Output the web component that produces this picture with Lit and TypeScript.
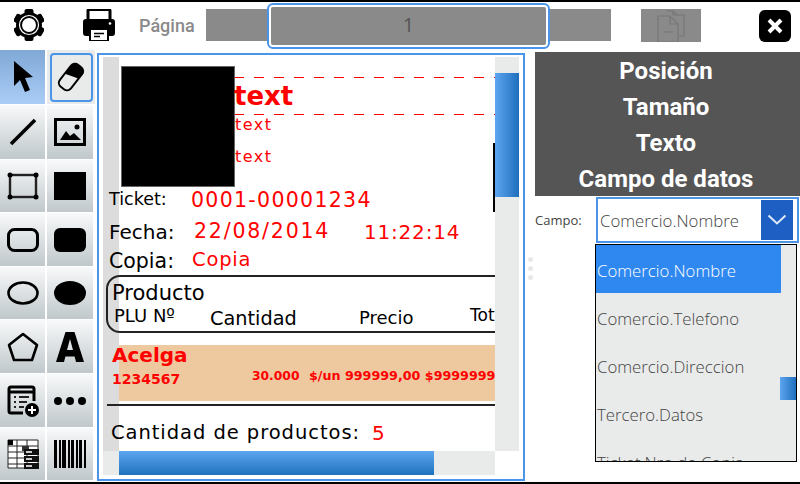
import { LitElement, html, css, svg } from "lit";
import { customElement } from "lit/decorators.js";

const i = (w: number, h: number, body: unknown) =>
  html`<svg width=${w} height=${h} viewBox="0 0 ${w} ${h}">${body}</svg>`;

const tools = [
  i(24, 36, svg`<path d="M3 2 L3 27 L9 21 L14 33 L19 31 L14 19 L22 18 Z" fill="#000"/>`),
  i(28, 36, svg`<g transform="rotate(38 14 18)"><rect x="6" y="3" width="16" height="30" rx="6" fill="#000"/><path d="M8 19 L20 15 V27 Q20 31 16 31 H12 Q8 31 8 27 Z" fill="#e9ebea"/></g>`),
  i(28, 28, svg`<path d="M2 26 L26 2" stroke="#000" stroke-width="3.5"/>`),
  i(32, 28, svg`<rect x="1.5" y="1.5" width="29" height="25" fill="none" stroke="#000" stroke-width="3"/><path d="M6 22 L12 13 L16 18 L20 15 L27 22 Z" fill="#000"/><circle cx="23" cy="9" r="2.5" fill="#000"/>`),
  i(32, 28, svg`<rect x="3" y="3" width="26" height="22" fill="none" stroke="#222" stroke-width="2.4"/><g fill="#000"><circle cx="3" cy="3" r="2.5"/><circle cx="29" cy="3" r="2.5"/><circle cx="3" cy="25" r="2.5"/><circle cx="29" cy="25" r="2.5"/></g>`),
  i(32, 28, svg`<rect x="0" y="0" width="32" height="28" fill="#000"/>`),
  i(32, 24, svg`<rect x="1.5" y="1.5" width="29" height="21" rx="6" fill="none" stroke="#000" stroke-width="3"/>`),
  i(32, 24, svg`<rect x="0" y="0" width="32" height="24" rx="6" fill="#000"/>`),
  i(32, 24, svg`<ellipse cx="16" cy="12" rx="14.5" ry="10.5" fill="none" stroke="#000" stroke-width="2.6"/>`),
  i(32, 24, svg`<ellipse cx="16" cy="12" rx="16" ry="12" fill="#000"/>`),
  i(32, 30, svg`<path d="M16 2 L30 13 L25 28 L7 28 L2 13 Z" fill="none" stroke="#000" stroke-width="2.6" stroke-linejoin="round"/>`),
  i(28, 30, svg`<path d="M9.5 0 H18.5 L28 30 H20 L18.6 24.500 H9.400 L8 30 H0 Z M11 18 H17 L14 7 Z" fill="#000" fill-rule="evenodd"/>`),
  i(32, 32, svg`<path d="M27 16 V4 Q27 2 25 2 H4 Q2 2 2 4 V26 Q2 28 4 28 H16" fill="none" stroke="#000" stroke-width="3"/><path d="M2 7 H27" stroke="#000" stroke-width="3"/><path d="M7 12 H9 M12 12 H22 M7 17 H9 M12 17 H20 M7 22 H9 M12 22 H17" stroke="#222" stroke-width="2"/><circle cx="25" cy="25" r="7" fill="#000"/><path d="M25 21 V29 M21 25 H29" stroke="#fff" stroke-width="2"/>`),
  i(32, 8, svg`<g fill="#000"><circle cx="4" cy="4" r="4"/><circle cx="16" cy="4" r="4"/><circle cx="28" cy="4" r="4"/></g>`),
  i(32, 30, svg`<rect x="1" y="1" width="30" height="28" fill="#fff"/><path d="M1 1 H31 M1 7 H31 M1 13 H31 M1 19 H31 M1 25 H31 M1 29 H31 M1 1 V29 M10 1 V29 M20 1 V29 M31 1 V29" stroke="#222" stroke-width="1"/><rect x="1" y="1" width="5" height="5" fill="#000"/><rect x="15" y="7" width="7" height="5" fill="#333"/><g fill="#111"><rect x="17" y="10" width="15" height="6"/><rect x="17" y="17" width="15" height="6"/><rect x="17" y="24" width="15" height="6"/></g><g fill="#ccc"><rect x="19" y="12" width="6" height="2"/><rect x="19" y="19" width="6" height="2"/><rect x="19" y="26" width="6" height="2"/></g>`),
  i(32, 28, svg`<g fill="#000"><rect x="0" y="0" width="3" height="28"/><rect x="5" y="0" width="2" height="28"/><rect x="8" y="0" width="4" height="28"/><rect x="14" y="0" width="2" height="28"/><rect x="17" y="0" width="3" height="28"/><rect x="22" y="0" width="2" height="28"/><rect x="25" y="0" width="3" height="28"/><rect x="30" y="0" width="2" height="28"/></g>`),
];

const gear = html`<svg width="30" height="32" viewBox="-15 -16 30 32">
  <g fill="#000">${[0, 60, 120, 180, 240, 300].map(
    (a) => svg`<rect x="-4.500" y="-16" width="9" height="8" rx="2" transform="rotate(${a})"/>`
  )}<circle r="13"/></g>
  <circle r="9.500" fill="none" stroke="#fff" stroke-width="1.200"/>
  <circle r="7" fill="#fff"/>
</svg>`;

const printer = html`<svg width="32" height="32" viewBox="0 0 32 32">
  <path d="M5 13 V2 Q5 0.500 6.500 0.500 H25.500 Q27 0.500 27 2 V13" fill="none" stroke="#000" stroke-width="3"/>
  <rect x="0" y="10" width="32" height="17" rx="3" fill="#000"/>
  <circle cx="27" cy="14.500" r="1.300" fill="#fff"/>
  <rect x="7" y="20" width="18" height="12" fill="#fff" stroke="#000" stroke-width="2"/>
  <path d="M11 24.500 H21 M11 27.500 H17" stroke="#000" stroke-width="1.500"/>
</svg>`;

const docs = html`<svg width="28" height="32" viewBox="0 0 28 32" fill="none" stroke="#777" stroke-width="1.200">
  <path d="M10 1 H16 L20 5 M16 1 V5 H27 V26 H22"/>
  <path d="M1 6 H13 L21 14 V32 H1 Z M13 6 V14 H21"/>
  <path d="M6 22 H16"/>
</svg>`;

const items = ["Comercio.Nombre", "Comercio.Telefono", "Comercio.Direccion", "Tercero.Datos", "Ticket.Nro de Copia"];
const menus = ["Posición", "Tamaño", "Texto", "Campo de datos"];

@customElement("app-root")
export class AppRoot extends LitElement {
  static styles = css`
    :host { display: block; width: 800px; height: 484px; overflow: hidden; background: #fff; }
    * { box-sizing: border-box; }
    .root { width: 800px; height: 484px; border-top: 2px solid #000; border-bottom: 2px solid #000; display: flex; flex-direction: column; }
    .top { height: 48px; flex: none; display: flex; align-items: center; position: relative; }
    .gear { margin-left: 14px; display: flex; margin-bottom: 2px; }
    .printer { margin-left: 39px; display: flex; margin-bottom: 2px; }
    .pagina { margin-left: 24px; width: 67px; font: 500 18px Roboto, sans-serif; color: #8a8a8a; margin-bottom: 2px; }
    .bar { width: 405px; height: 32px; background: #8a8a8a; display: flex; justify-content: center; margin-bottom: 2px; position: relative; }
    .field { position: absolute; left: 61px; top: -6px; width: 283px; height: 46px; border: 2px solid #4a94ea; border-radius: 6px; background: #fff; padding: 2px; }
    .field div { height: 100%; background: #8a8a8a; border-radius: 2px; display: flex; align-items: center; justify-content: center; color: #555; font: 20px "Open Sans", sans-serif; padding-bottom: 3px; }
    .docs { margin-left: 30px; width: 60px; height: 33px; background: #8a8a8a; display: flex; justify-content: center; align-items: center; margin-bottom: 1px; }
    .close { margin-left: 58px; width: 32px; height: 32px; background: #000; border-radius: 6px; display: flex; align-items: center; justify-content: center; }
    .main { flex: 1; display: flex; min-height: 0; }
    .tools { width: 97px; flex: none; display: grid; grid-template-columns: 45px 46px; column-gap: 2px; grid-template-rows: 55px 55px 53px 54px 53px 54px 54px 53px; }
    .t { margin-bottom: 1px; display: flex; align-items: center; justify-content: center; background: linear-gradient(#f8f9fa, #c0c8cb); }
    .t.sel { background: linear-gradient(#80a8d6, #aacdf6); }
    .t.focus { background: #e9ebea; width: 48px; justify-content: flex-start; padding: 0 0 0 2.500px; }
    .t.focus span { width: 43px; height: 49px; border: 2px solid #4a94ea; border-radius: 4px; display: flex; align-items: center; justify-content: center; }
    .canvas { width: 428px; height: 428px; margin-top: 3px; border: 2px solid #4a94ea; flex: none; padding: 2px 3px 5px 4px; display: grid; grid-template-columns: 392px 24px; grid-template-rows: 394px 24px; }
    .paper { position: relative; overflow: hidden; background: #fff; }
    .strip { position: absolute; left: 0; top: 0; width: 16px; height: 394px; background: #dcdcdc; }
    .paper span, .paper i, .paper b { position: absolute; white-space: pre; font-family: "DejaVu Sans", sans-serif; font-style: normal; line-height: 1; }
    .logo { position: absolute; left: 18px; top: 9px; width: 114px; height: 121px; background: #000; border: 1px solid #666; }
    .dash { position: absolute; left: 131px; right: 0; height: 1px; background: repeating-linear-gradient(90deg, #f00 0 10px, transparent 10px 20px); }
    .v { position: absolute; left: 390px; top: 86px; width: 2px; height: 69px; background: #000; }
    .r { color: #f00; }
    .k { color: #000; }
    .box { position: absolute; left: 3px; top: 218px; width: 420px; height: 58px; border: 2px solid #222; border-radius: 14px; }
    .row { position: absolute; left: 16px; right: 0; top: 288px; height: 56px; background: #eec89f; }
    .rule { position: absolute; left: 4px; right: 0; top: 347px; height: 2px; background: #222; }
    .vtrack { background: #e9ebea; padding-top: 16px; }
    .vthumb { height: 124px; background: linear-gradient(90deg, #5da5ef, #1f6fbd); }
    .htrack { background: #e9ebea; padding-left: 16px; }
    .hthumb { width: 315px; height: 24px; background: linear-gradient(#5da5ef, #1f72bf); }
    .side { flex: 1; position: relative; padding-left: 10px; padding-top: 2px; }
    .dots { position: absolute; left: 3px; top: 207px; display: flex; flex-direction: column; gap: 4px; }
    .dots u { width: 5px; height: 5px; border-radius: 50%; background: #e8e8e8; display: block; }
    .menu { height: 144px; background: #555; display: grid; grid-auto-rows: 36px; align-items: center; text-align: center; color: #fff; font: 700 24px Roboto, sans-serif; padding: 1px 3px 0 0; }
    .campo { display: flex; height: 48px; align-items: center; }
    .campo label { width: 61px; font: 13px "Open Sans", sans-serif; color: #444; }
    .select { width: 203px; height: 46px; border: 2px solid #4a94ea; background: #fff; display: flex; align-items: center; justify-content: space-between; padding: 0 4px 0 2px; font: 300 16.800px "Open Sans", sans-serif; color: #444; }
    .chev { width: 32px; height: 40px; background: #1e5fc4; display: flex; align-items: center; justify-content: center; }
    .list { width: 202px; height: 218px; margin-left: 60px; border: 1px solid #000; background: #e9ebea; overflow: hidden; position: relative; }
    .it { width: 185px; height: 48px; display: flex; align-items: center; padding: 2px 0 0 1px; font: 300 16.800px "Open Sans", sans-serif; color: #444; white-space: nowrap; }
    .it.on { background: #2f88ef; color: #fff; }
    .lthumb { position: absolute; right: 0; top: 132px; width: 16px; height: 23px; background: linear-gradient(90deg, #5da5ef, #1f6fbd); }
  `;

  render() {
    return html`<div class="root">
      <div class="top">
        <div class="gear">${gear}</div>
        <div class="printer">${printer}</div>
        <div class="pagina">Página</div>
        <div class="bar"><div class="field"><div>1</div></div></div>
        <div class="docs">${docs}</div>
        <div class="close"><svg width="20" height="20" viewBox="0 0 20 20"><path d="M4 4 L16 16 M16 4 L4 16" stroke="#fff" stroke-width="4"/></svg></div>
      </div>
      <div class="main">
        <div class="tools">
          ${tools.map((t, n) =>
            n === 1
              ? html`<div class="t focus"><span>${t}</span></div>`
              : html`<div class="t ${n === 0 ? "sel" : ""}">${t}</div>`
          )}
        </div>
        <div class="canvas">
          <div class="paper">
            <div class="strip"></div>
            <div class="dash" style="top:20px"></div>
            <div class="dash" style="top:57px"></div>
            <div class="logo"></div>
            <b class="r" style="left:131px;top:26px;font-size:26px">text</b>
            <span class="r" style="left:132px;top:60px;font-size:16px;letter-spacing:1.500px">text</span>
            <span class="r" style="left:132px;top:92px;font-size:16px;letter-spacing:1.500px">text</span>
            <div class="v"></div>
            <span class="k" style="left:6px;top:134px;font-size:17.500px">Ticket:</span>
            <span class="r" style="left:88px;top:133px;font-size:20.500px;letter-spacing:1.300px">0001-00001234</span>
            <span class="k" style="left:6px;top:165px;font-size:20px">Fecha:</span>
            <span class="r" style="left:91px;top:164px;font-size:20.500px;letter-spacing:1.800px">22/08/2014</span>
            <span class="r" style="left:261px;top:165px;font-size:20px;letter-spacing:.8px">11:22:14</span>
            <span class="k" style="left:6px;top:194px;font-size:20.500px">Copia:</span>
            <span class="r" style="left:89px;top:193px;font-size:19.500px;letter-spacing:.8px">Copia</span>
            <div class="box"></div>
            <span class="k" style="left:9px;top:226px;font-size:21px">Producto</span>
            <span class="k" style="left:11px;top:250px;font-size:18px">PLU Nº</span>
            <span class="k" style="left:107px;top:252px;font-size:19.300px">Cantidad</span>
            <span class="k" style="left:256px;top:252px;font-size:18px">Precio</span>
            <span class="k" style="left:367px;top:250px;font-size:17px">Total</span>
            <div class="row"></div>
            <b class="r" style="left:9px;top:288px;font-size:20px">Acelga</b>
            <b class="r" style="left:9px;top:315px;font-size:14px">1234567</b>
            <b class="r" style="left:149px;top:313px;font-size:12.300px">30.000</b>
            <b class="r" style="left:206px;top:313px;font-size:12.700px">$/un 999999,00 $9999999</b>
            <div class="rule"></div>
            <span class="k" style="left:8px;top:366px;font-size:19.500px;letter-spacing:.95px">Cantidad de productos:</span>
            <span class="r" style="left:269px;top:366px;font-size:20px">5</span>
          </div>
          <div class="vtrack"><div class="vthumb"></div></div>
          <div class="htrack"><div class="hthumb"></div></div>
          <div></div>
        </div>
        <div class="side">
          <div class="dots"><u></u><u></u><u></u></div>
          <div class="menu">${menus.map((m) => html`<div>${m}</div>`)}</div>
          <div class="campo">
            <label>Campo:</label>
            <div class="select">Comercio.Nombre<span class="chev"><svg width="20" height="12" viewBox="0 0 20 12"><path d="M1.500 1.500 L10 9.500 L18.500 1.500" fill="none" stroke="#dfe9f7" stroke-width="2"/></svg></span></div>
          </div>
          <div class="list">
            ${items.map((t, n) => html`<div class="it ${n === 0 ? "on" : ""}">${t}</div>`)}
            <div class="lthumb"></div>
          </div>
        </div>
      </div>
    </div>`;
  }
}
